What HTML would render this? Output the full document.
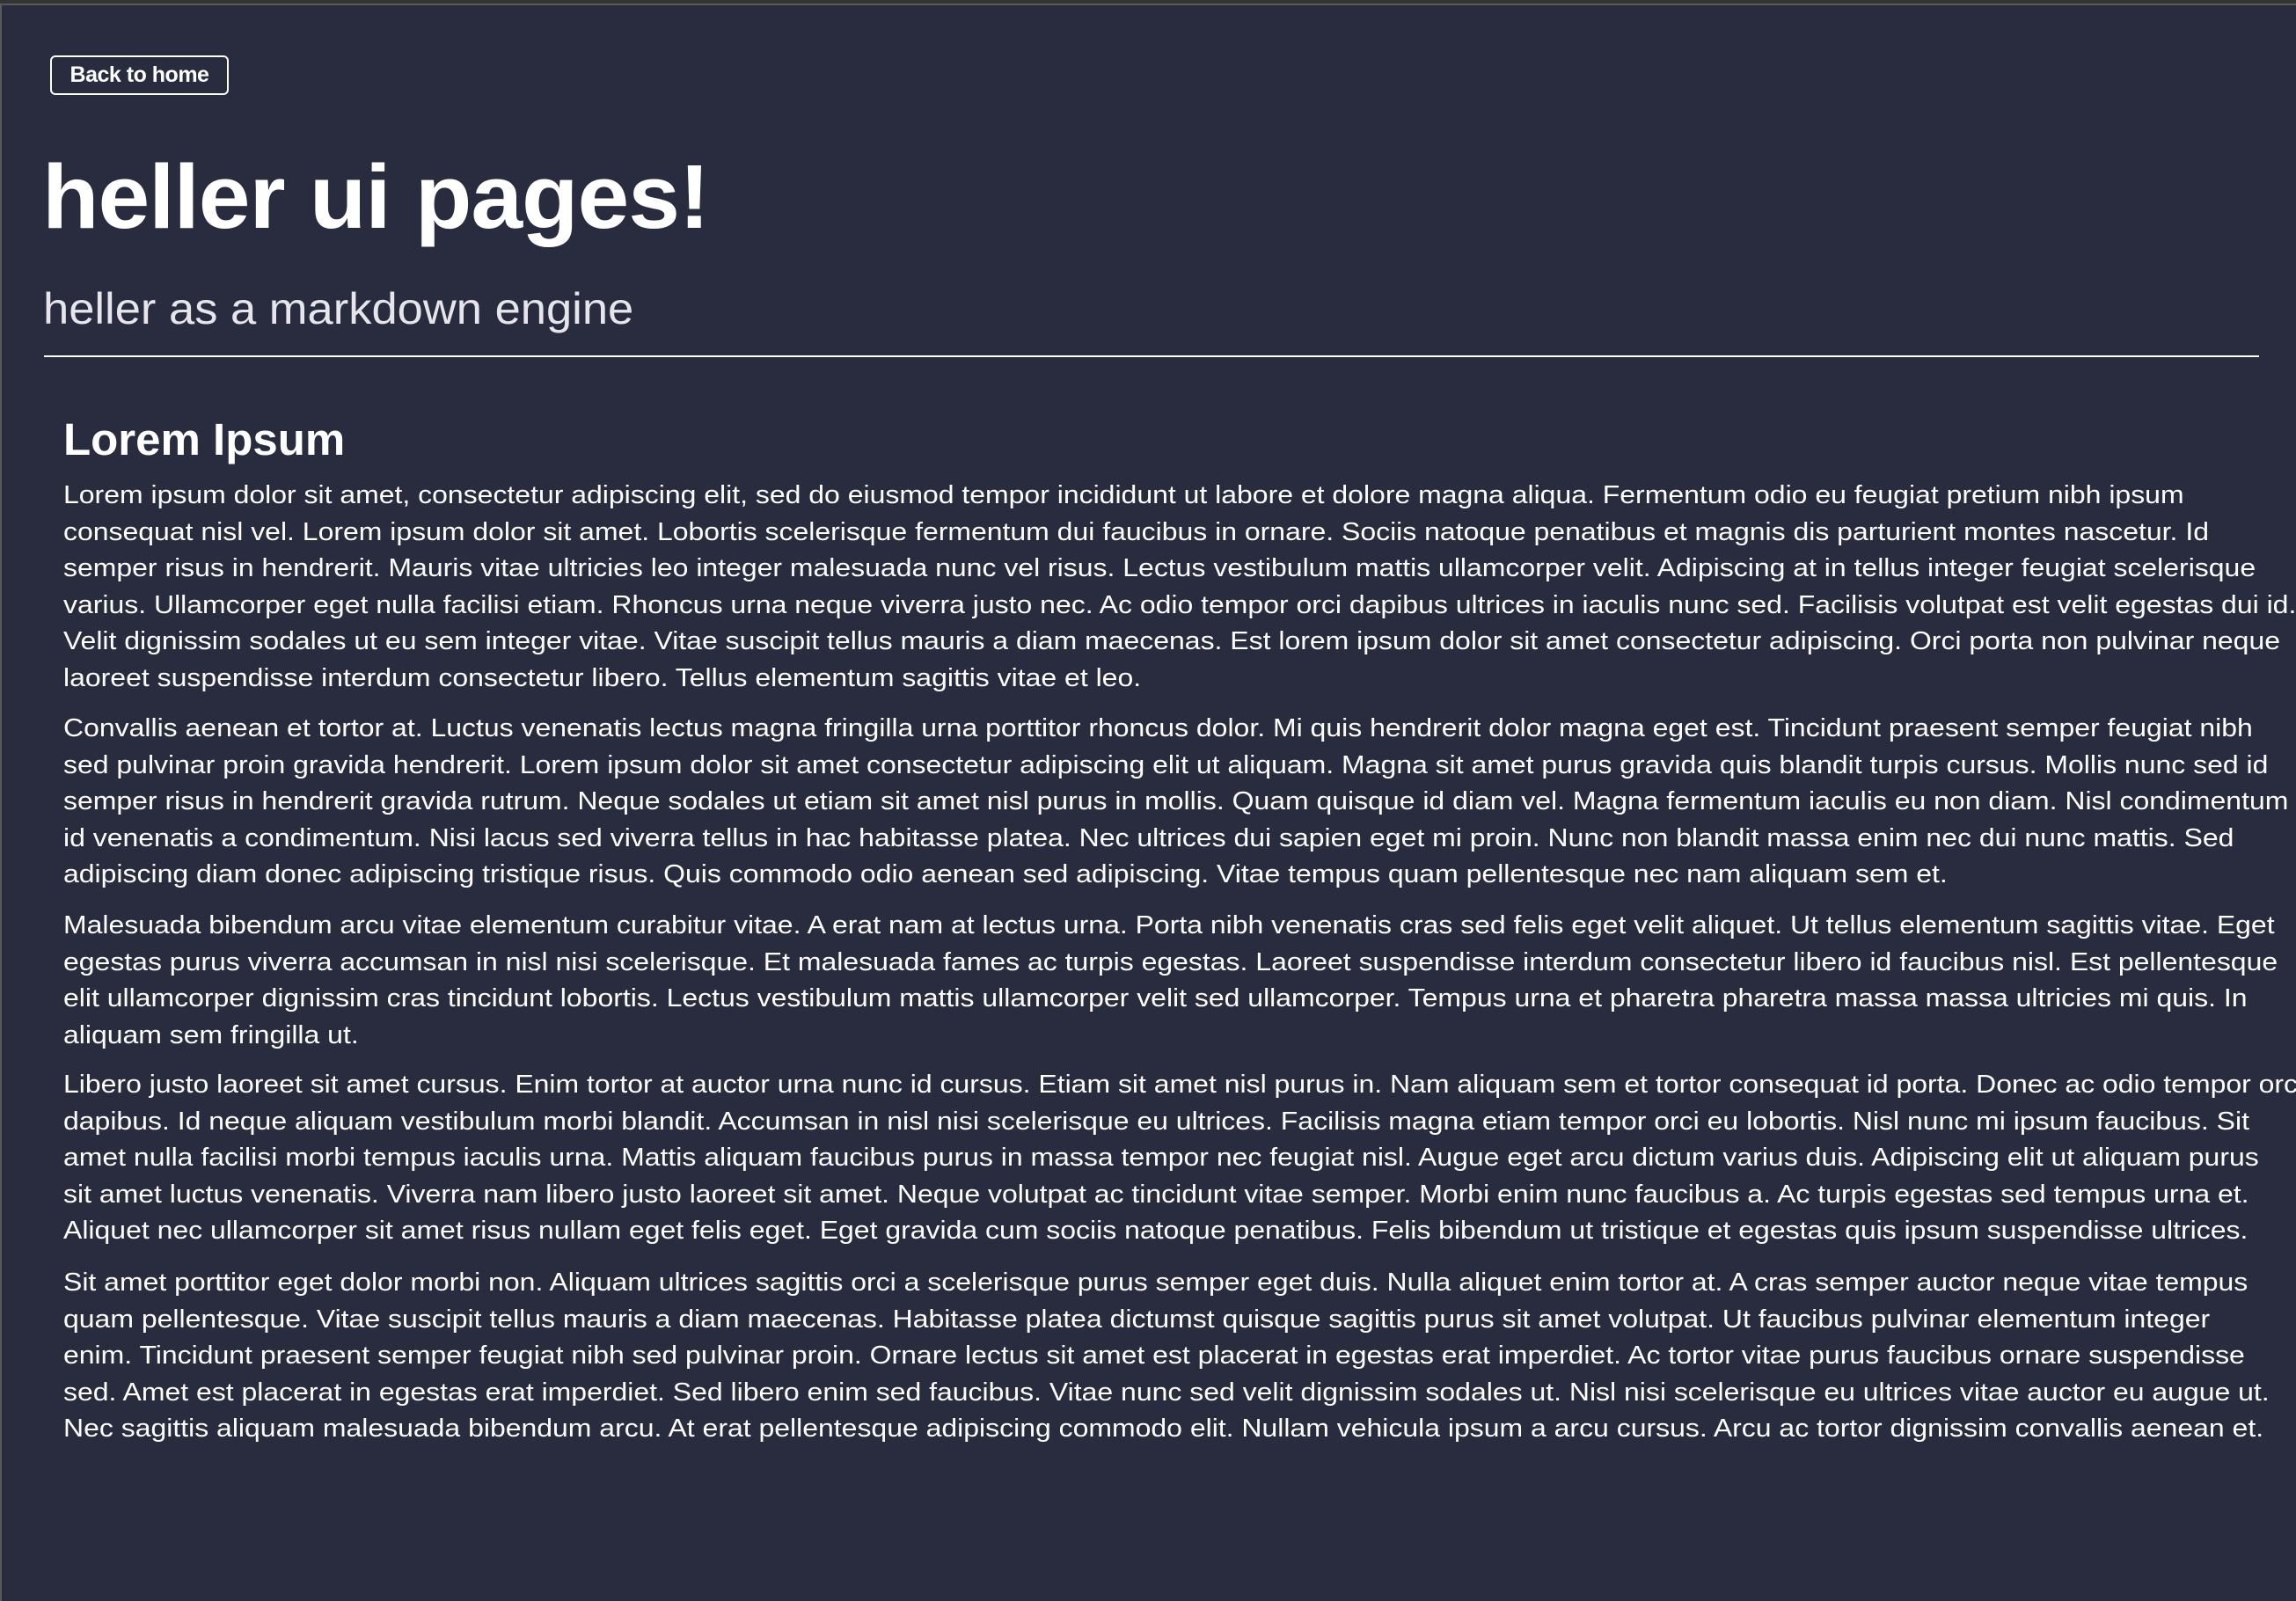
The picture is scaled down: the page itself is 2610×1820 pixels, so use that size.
<!DOCTYPE html>
<html><head><meta charset="utf-8"><style>
html,body{margin:0;padding:0}
body{width:2610px;height:1820px;background:#292b3f;position:relative;overflow:hidden;font-family:"Liberation Sans",sans-serif;color:#fff}
.top1{position:absolute;left:0;top:0;width:2610px;height:4px;background:#333}
.top2{position:absolute;left:0;top:4px;width:2610px;height:2px;background:#5a5a5e}
.left{position:absolute;left:0;top:4px;width:2px;height:1816px;background:#5a5a5e}
.btn{position:absolute;left:57px;top:63px;width:199px;height:41px;border:2px solid #fff;border-radius:6px;font-weight:bold;font-size:25px;line-height:41px;text-align:center;letter-spacing:-0.5px}
h1{position:absolute;left:48px;top:172px;margin:0;font-size:103px;line-height:103px;font-weight:bold;letter-spacing:-1px;white-space:nowrap;transform:scaleX(1.025);transform-origin:left}
.sub{position:absolute;left:49px;top:326px;font-size:50px;line-height:50px;font-weight:300;color:#e6e6ea;white-space:nowrap;transform:scaleX(1.05);transform-origin:left}
.hr{position:absolute;left:50px;top:404px;width:2518px;height:2px;background:#fff}
h2{position:absolute;left:72px;top:474px;margin:0;font-size:51px;line-height:51px;font-weight:bold;white-space:nowrap}
.p{position:absolute;left:72px;font-size:29px;line-height:41.6px;white-space:nowrap;transform:scaleX(1.102);transform-origin:left}
</style></head><body>
<div class="top1"></div><div class="top2"></div><div class="left"></div>
<div class="btn">Back to home</div>
<h1>heller ui pages!</h1>
<div class="sub">heller as a markdown engine</div>
<div class="hr"></div>
<h2>Lorem Ipsum</h2>
<div class="p" style="top:543px">Lorem ipsum dolor sit amet, consectetur adipiscing elit, sed do eiusmod tempor incididunt ut labore et dolore magna aliqua. Fermentum odio eu feugiat pretium nibh ipsum<br>consequat nisl vel. Lorem ipsum dolor sit amet. Lobortis scelerisque fermentum dui faucibus in ornare. Sociis natoque penatibus et magnis dis parturient montes nascetur. Id<br>semper risus in hendrerit. Mauris vitae ultricies leo integer malesuada nunc vel risus. Lectus vestibulum mattis ullamcorper velit. Adipiscing at in tellus integer feugiat scelerisque<br>varius. Ullamcorper eget nulla facilisi etiam. Rhoncus urna neque viverra justo nec. Ac odio tempor orci dapibus ultrices in iaculis nunc sed. Facilisis volutpat est velit egestas dui id.<br>Velit dignissim sodales ut eu sem integer vitae. Vitae suscipit tellus mauris a diam maecenas. Est lorem ipsum dolor sit amet consectetur adipiscing. Orci porta non pulvinar neque<br>laoreet suspendisse interdum consectetur libero. Tellus elementum sagittis vitae et leo.</div>
<div class="p" style="top:808px">Convallis aenean et tortor at. Luctus venenatis lectus magna fringilla urna porttitor rhoncus dolor. Mi quis hendrerit dolor magna eget est. Tincidunt praesent semper feugiat nibh<br>sed pulvinar proin gravida hendrerit. Lorem ipsum dolor sit amet consectetur adipiscing elit ut aliquam. Magna sit amet purus gravida quis blandit turpis cursus. Mollis nunc sed id<br>semper risus in hendrerit gravida rutrum. Neque sodales ut etiam sit amet nisl purus in mollis. Quam quisque id diam vel. Magna fermentum iaculis eu non diam. Nisl condimentum<br>id venenatis a condimentum. Nisi lacus sed viverra tellus in hac habitasse platea. Nec ultrices dui sapien eget mi proin. Nunc non blandit massa enim nec dui nunc mattis. Sed<br>adipiscing diam donec adipiscing tristique risus. Quis commodo odio aenean sed adipiscing. Vitae tempus quam pellentesque nec nam aliquam sem et.</div>
<div class="p" style="top:1032px">Malesuada bibendum arcu vitae elementum curabitur vitae. A erat nam at lectus urna. Porta nibh venenatis cras sed felis eget velit aliquet. Ut tellus elementum sagittis vitae. Eget<br>egestas purus viverra accumsan in nisl nisi scelerisque. Et malesuada fames ac turpis egestas. Laoreet suspendisse interdum consectetur libero id faucibus nisl. Est pellentesque<br>elit ullamcorper dignissim cras tincidunt lobortis. Lectus vestibulum mattis ullamcorper velit sed ullamcorper. Tempus urna et pharetra pharetra massa massa ultricies mi quis. In<br>aliquam sem fringilla ut.</div>
<div class="p" style="top:1213px">Libero justo laoreet sit amet cursus. Enim tortor at auctor urna nunc id cursus. Etiam sit amet nisl purus in. Nam aliquam sem et tortor consequat id porta. Donec ac odio tempor orci<br>dapibus. Id neque aliquam vestibulum morbi blandit. Accumsan in nisl nisi scelerisque eu ultrices. Facilisis magna etiam tempor orci eu lobortis. Nisl nunc mi ipsum faucibus. Sit<br>amet nulla facilisi morbi tempus iaculis urna. Mattis aliquam faucibus purus in massa tempor nec feugiat nisl. Augue eget arcu dictum varius duis. Adipiscing elit ut aliquam purus<br>sit amet luctus venenatis. Viverra nam libero justo laoreet sit amet. Neque volutpat ac tincidunt vitae semper. Morbi enim nunc faucibus a. Ac turpis egestas sed tempus urna et.<br>Aliquet nec ullamcorper sit amet risus nullam eget felis eget. Eget gravida cum sociis natoque penatibus. Felis bibendum ut tristique et egestas quis ipsum suspendisse ultrices.</div>
<div class="p" style="top:1438px">Sit amet porttitor eget dolor morbi non. Aliquam ultrices sagittis orci a scelerisque purus semper eget duis. Nulla aliquet enim tortor at. A cras semper auctor neque vitae tempus<br>quam pellentesque. Vitae suscipit tellus mauris a diam maecenas. Habitasse platea dictumst quisque sagittis purus sit amet volutpat. Ut faucibus pulvinar elementum integer<br>enim. Tincidunt praesent semper feugiat nibh sed pulvinar proin. Ornare lectus sit amet est placerat in egestas erat imperdiet. Ac tortor vitae purus faucibus ornare suspendisse<br>sed. Amet est placerat in egestas erat imperdiet. Sed libero enim sed faucibus. Vitae nunc sed velit dignissim sodales ut. Nisl nisi scelerisque eu ultrices vitae auctor eu augue ut.<br>Nec sagittis aliquam malesuada bibendum arcu. At erat pellentesque adipiscing commodo elit. Nullam vehicula ipsum a arcu cursus. Arcu ac tortor dignissim convallis aenean et.</div>
</body></html>
